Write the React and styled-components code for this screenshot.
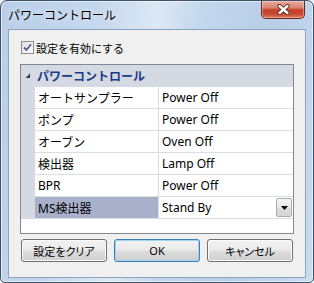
import React from 'react';
import styled, { createGlobalStyle } from 'styled-components';

const Global = createGlobalStyle`
  html, body { margin: 0; padding: 0; background: #e8eef5; }
  body { font-family: "Noto Sans", "Noto Sans CJK JP", sans-serif; }
  *, *::before, *::after { box-sizing: border-box; }
`;

const Window = styled.div`
  width: 314px;
  height: 283px;
  border: 1px solid #40526a;
  border-radius: 7px 7px 5px 5px;
  background: linear-gradient(100deg, #b9cfe8 0%, #c5d8ed 28%, #dce8f5 44%, #c3d7ed 56%, #b8cee7 76%, #c9dcf0 100%);
  box-shadow: inset 0 0 0 1px rgba(255, 255, 255, 0.55);
  display: flex;
  flex-direction: column;
`;

const TitleBar = styled.div`
  height: 28px;
  display: flex;
  align-items: flex-start;
`;

const Title = styled.span`
  margin: 7px 0 0 7px;
  font-size: 12px;
  line-height: 15px;
  color: #000;
  text-shadow: 0 0 6px rgba(255, 255, 255, 0.9);
`;

const CloseButton = styled.div`
  margin-left: auto;
  margin-right: 8px;
  width: 44px;
  height: 18px;
  border: 1px solid #6b2a20;
  border-top: none;
  border-radius: 0 0 5px 5px;
  background: linear-gradient(#e9ab9c 0%, #d98470 40%, #c4402b 52%, #c94832 75%, #dc7a5e 100%);
  box-shadow: inset 0 0 0 1px rgba(255, 220, 210, 0.45);
  display: flex;
  align-items: center;
  justify-content: center;
`;

const Client = styled.div`
  margin: 0 7px;
  height: 249px;
  background: #f0f0f0;
  border: 1px solid #8ea2bc;
  padding: 0 11px;
  display: flex;
  flex-direction: column;
`;

const CheckRow = styled.label`
  margin: 11px 0 0 1px;
  height: 13px;
  display: flex;
  align-items: center;
  gap: 2px;
  font-size: 11px;
  color: #000;
`;

const CheckBox = styled.span`
  width: 13px;
  height: 13px;
  border: 1px solid #8e8f8f;
  background: linear-gradient(135deg, #dedede, #fbfbfb);
  display: flex;
  align-items: center;
  justify-content: center;
`;

const Grid = styled.div`
  margin-top: 10px;
  height: 170px;
  border: 1px solid #828790;
  background: #fff;
  display: flex;
  flex-direction: column;
`;

const CategoryRow = styled.div`
  height: 22px;
  background: #d5d9e2;
  display: flex;
  align-items: center;
`;

const Gutter = styled.div`
  width: 14px;
  flex: none;
  align-self: stretch;
  background: #d5d9e2;
  display: flex;
  align-items: center;
  justify-content: center;
`;

const CategoryText = styled.span`
  margin-left: 2px;
  font-size: 12px;
  font-weight: bold;
  color: #1b3b8a;
`;

const Row = styled.div`
  height: 22px;
  display: flex;
`;

const NameCell = styled.div`
  width: 124px;
  flex: none;
  border-right: 1px solid #dadde3;
  border-bottom: 1px solid #dadde3;
  background: ${p => (p.$selected ? '#a9b1ca' : '#fff')};
  padding-left: 3px;
  display: flex;
  align-items: center;
  font-size: 12px;
  color: #000;
  white-space: nowrap;
`;

const ValueCell = styled.div`
  flex: 1;
  border-bottom: 1px solid #dadde3;
  padding-left: 3px;
  padding-right: 1px;
  display: flex;
  align-items: center;
  font-size: 12px;
  color: #000;
  white-space: nowrap;
`;

const DropButton = styled.div`
  margin-left: auto;
  width: 16px;
  height: 19px;
  border: 1px solid #a9adb5;
  border-radius: 2px;
  background: linear-gradient(#f6f6f6, #e6e6e6 50%, #dcdcdc 51%, #d6d6d6);
  display: flex;
  align-items: center;
  justify-content: center;
`;

const Filler = styled.div`
  flex: 1;
  background: #fff;
`;

const ButtonRow = styled.div`
  margin-top: 5px;
  padding: 0 1px;
  display: flex;
  gap: 7px;
`;

const Button = styled.div`
  width: 86px;
  height: 23px;
  border: 1px solid ${p => (p.$default ? '#3c7fb1' : '#707070')};
  border-radius: 3px;
  background: linear-gradient(#f2f2f2 0%, #ebebeb 48%, #dddddd 52%, #cfcfcf 100%);
  box-shadow: inset 0 0 0 1px ${p => (p.$default ? '#9ed6f3' : '#fbfbfb')};
  display: flex;
  align-items: center;
  justify-content: center;
  font-size: 11px;
  font-feature-settings: "palt";
  color: #000;
`;

const rows = [
  { name: 'オートサンプラー', value: 'Power Off' },
  { name: 'ポンプ', value: 'Power Off' },
  { name: 'オーブン', value: 'Oven Off' },
  { name: '検出器', value: 'Lamp Off' },
  { name: 'BPR', value: 'Power Off' },
  { name: 'MS検出器', value: 'Stand By', selected: true },
];

export default function App() {
  return (
    <>
      <Global />
      <Window>
        <TitleBar>
          <Title>パワーコントロール</Title>
          <CloseButton>
            <svg width="13" height="11" viewBox="0 0 13 11">
              <path d="M2.5 2 L10.5 9 M10.5 2 L2.5 9" stroke="#5a2018" strokeWidth="4.2" strokeLinecap="round" fill="none" />
              <path d="M2.5 2 L10.5 9 M10.5 2 L2.5 9" stroke="#ffffff" strokeWidth="2.4" strokeLinecap="round" fill="none" />
            </svg>
          </CloseButton>
        </TitleBar>
        <Client>
          <CheckRow>
            <CheckBox>
              <svg width="9" height="9" viewBox="0 0 9 9">
                <path d="M1 4.5 L3.5 7 L8 1.2" stroke="#4a5f9a" strokeWidth="1.8" fill="none" />
              </svg>
            </CheckBox>
            <span>設定を有効にする</span>
          </CheckRow>
          <Grid>
            <CategoryRow>
              <Gutter>
                <svg width="6" height="6" viewBox="0 0 6 6">
                  <polygon points="5,0.5 5,5 0.5,5" fill="#3c3c3c" />
                </svg>
              </Gutter>
              <CategoryText>パワーコントロール</CategoryText>
            </CategoryRow>
            {rows.map(r => (
              <Row key={r.name}>
                <Gutter />
                <NameCell $selected={r.selected}>{r.name}</NameCell>
                <ValueCell>
                  {r.value}
                  {r.selected && (
                    <DropButton>
                      <svg width="7" height="4" viewBox="0 0 7 4">
                        <polygon points="0,0 7,0 3.5,4" fill="#000" />
                      </svg>
                    </DropButton>
                  )}
                </ValueCell>
              </Row>
            ))}
            <Filler />
          </Grid>
          <ButtonRow>
            <Button>設定をクリア</Button>
            <Button $default>OK</Button>
            <Button>キャンセル</Button>
          </ButtonRow>
        </Client>
      </Window>
    </>
  );
}
